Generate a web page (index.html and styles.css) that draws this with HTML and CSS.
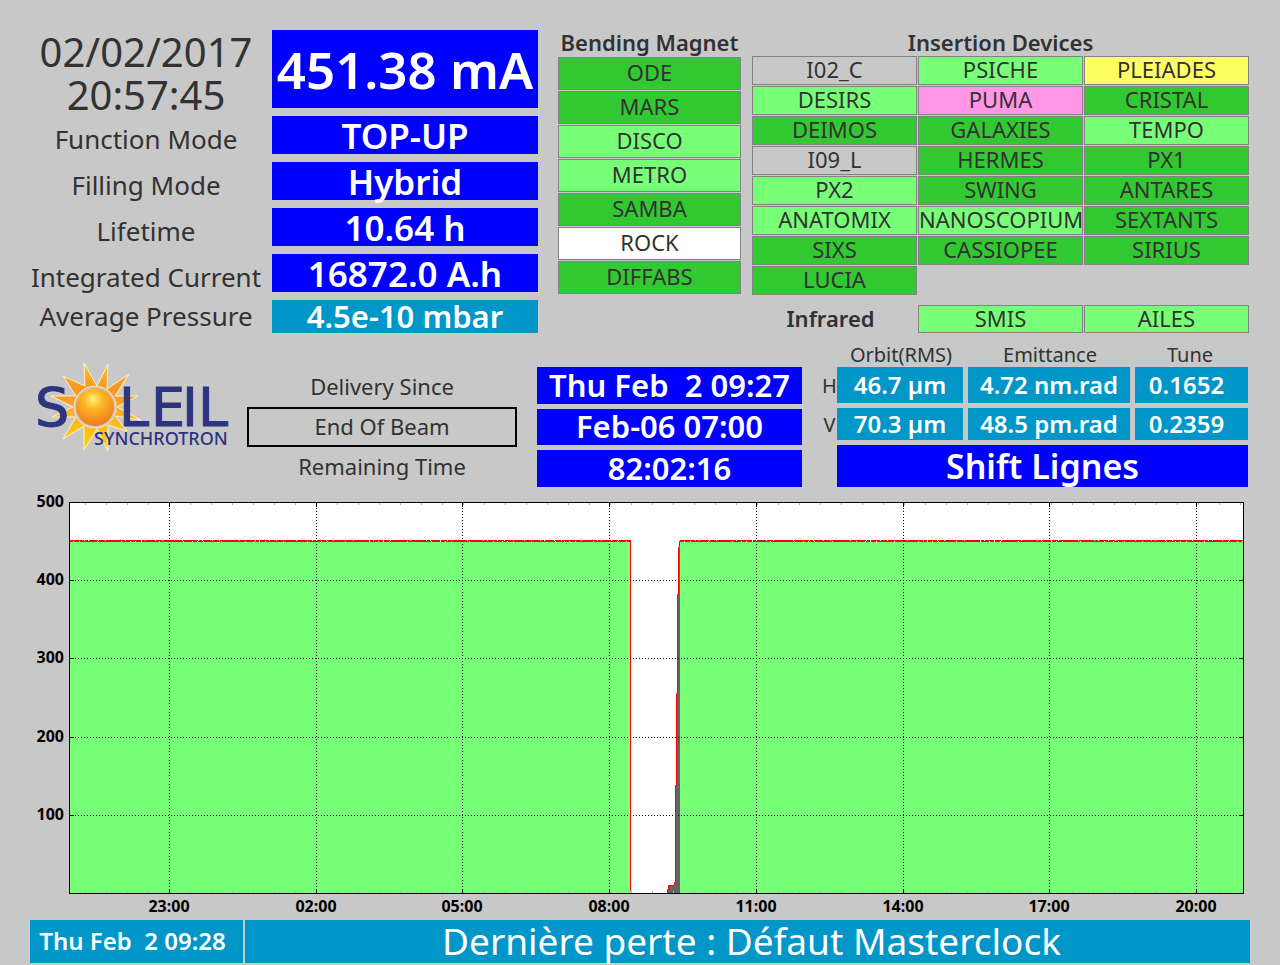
FILE: index.html
```
<!DOCTYPE html>
<html lang="en">
<head>
    <meta charset="UTF-8">
    <meta name="viewport" content="width=device-width, initial-scale=1.0">
    <title>SOLEIL Machine Status</title>
    <link rel="stylesheet" href="styles.css">
</head>
<body>
    <main class="page">
        <section class="top">
            <div class="status">
                <div class="clock">02/02/2017<br>20:57:45</div>
                <div class="value current">451.38 mA</div>
                <div class="label">Function Mode</div>
                <div class="value">TOP-UP</div>
                <div class="label">Filling Mode</div>
                <div class="value">Hybrid</div>
                <div class="label">Lifetime</div>
                <div class="value">10.64 h</div>
                <div class="label">Integrated Current</div>
                <div class="value">16872.0 A.h</div>
                <div class="label pressure-label">Average Pressure</div>
                <div class="value pressure">4.5e-10 mbar</div>
            </div>
            <div class="magnets">
                <h2>Bending Magnet</h2>
                <ul class="beamlines">
                    <li class="open">ODE</li>
                    <li class="open">MARS</li>
                    <li class="ready">DISCO</li>
                    <li class="ready">METRO</li>
                    <li class="open">SAMBA</li>
                    <li class="closed">ROCK</li>
                    <li class="open">DIFFABS</li>
                </ul>
            </div>
            <div class="devices">
                <h2>Insertion Devices</h2>
                <ul class="beamlines">
                    <li>I02_C</li>
                    <li class="ready">PSICHE</li>
                    <li class="warning">PLEIADES</li>
                    <li class="ready">DESIRS</li>
                    <li class="fault">PUMA</li>
                    <li class="open">CRISTAL</li>
                    <li class="open">DEIMOS</li>
                    <li class="open">GALAXIES</li>
                    <li class="ready">TEMPO</li>
                    <li>I09_L</li>
                    <li class="open">HERMES</li>
                    <li class="open">PX1</li>
                    <li class="ready">PX2</li>
                    <li class="open">SWING</li>
                    <li class="open">ANTARES</li>
                    <li class="ready">ANATOMIX</li>
                    <li class="ready">NANOSCOPIUM</li>
                    <li class="open">SEXTANTS</li>
                    <li class="open">SIXS</li>
                    <li class="open">CASSIOPEE</li>
                    <li class="open">SIRIUS</li>
                    <li class="open">LUCIA</li>
                </ul>
                <div class="infrared">
                    <h2>Infrared</h2>
                    <div class="beamline ready">SMIS</div>
                    <div class="beamline ready">AILES</div>
                </div>
            </div>
        </section>

        <section class="middle">
            <div class="logo">
                <svg width="199" height="91" viewBox="-5 0 199 91" role="img" aria-label="SOLEIL Synchrotron">
                    <defs>
                        <radialGradient id="ball" cx="0.45" cy="0.3" r="0.7">
                            <stop offset="0" stop-color="#fff27a"/>
                            <stop offset="0.35" stop-color="#fdb827"/>
                            <stop offset="1" stop-color="#ee7a1c"/>
                        </radialGradient>
                        <linearGradient id="rays" x1="0" y1="0" x2="0" y2="1">
                            <stop offset="0" stop-color="#fcbf30"/>
                            <stop offset="0.3" stop-color="#f79420"/>
                            <stop offset="0.6" stop-color="#fbb42c"/>
                            <stop offset="1" stop-color="#ffd200"/>
                        </linearGradient>
                    </defs>
                    <polygon points="47,1 60,24 71,2 70,27 92,12 78,34 101,34 80,45 104,58 78,54 90,69 71,63 71,89 60,67 47,88 47,64 26,77 39,55 15,55 36,45 14,34 39,34 26,14 48,24" fill="url(#rays)" stroke="#fff3c4" stroke-width="1"/>
                    <g class="logo-name">
                        <text x="-2" y="64">S</text>
                        <text x="82" y="64">L</text>
                        <text x="114" y="64">E</text>
                        <text x="145" y="64">I</text>
                        <text x="161" y="64">L</text>
                    </g>
                    <circle cx="58" cy="45" r="21" fill="#c8c8c8" stroke="#f4e6c8" stroke-width="1"/>
                    <circle cx="58" cy="45" r="19" fill="url(#ball)"/>
                    <text class="logo-sub" x="57" y="83">SYNCHROTRON</text>
                </svg>
            </div>
            <div class="delivery">
                <div>Delivery Since</div>
                <div class="framed">End Of Beam</div>
                <div>Remaining Time</div>
            </div>
            <div class="times">
                <div class="value">Thu Feb&nbsp; 2 09:27</div>
                <div class="value">Feb-06 07:00</div>
                <div class="value">82:02:16</div>
            </div>
            <div class="beam">
                <table>
                    <colgroup>
                        <col class="axis-col">
                        <col class="orbit-col">
                        <col class="emittance-col">
                        <col class="tune-col">
                    </colgroup>
                    <thead>
                        <tr>
                            <td></td>
                            <th scope="col">Orbit(RMS)</th>
                            <th scope="col">Emittance</th>
                            <th scope="col">Tune</th>
                        </tr>
                    </thead>
                    <tbody>
                        <tr class="horizontal">
                            <th scope="row">H</th>
                            <td>46.7 µm</td>
                            <td>4.72 nm.rad</td>
                            <td>0.1652</td>
                        </tr>
                        <tr class="vertical">
                            <th scope="row">V</th>
                            <td>70.3 µm</td>
                            <td>48.5 pm.rad</td>
                            <td>0.2359</td>
                        </tr>
                    </tbody>
                </table>
                <div class="value shift">Shift Lignes</div>
            </div>
        </section>

        <svg class="chart" viewBox="0 0 1220 430" role="img" aria-label="Stored current over the last 24 hours">
            <rect x="39" y="12" width="1175" height="391" fill="#fff"/>
            <!-- delivered beam -->
            <rect class="beam-area" x="39" y="52" width="562" height="351"/>
            <rect class="beam-area" x="650" y="52" width="564" height="351"/>
            <!-- injection -->
            <polygon fill="#646464" points="638,403 638,396 645,396 645,392 646,392 646,295 647,295 647,204 648,204 648,104 649,104 649,58 650,58 650,403"/>
            <g class="grid">
                <path d="M39 90.5H1214M39 168.5H1214M39 247.5H1214M39 325.5H1214"/>
                <path d="M139.5 12V403M286.5 12V403M432.5 12V403M579.5 12V403M726.5 12V403M873.5 12V403M1019.5 12V403M1166.5 12V403"/>
            </g>
            <g class="minor">
                <path d="M55 14H1213"/>
                <path d="M55 402H1213"/>
            </g>
            <g class="trace">
                <path class="noise-top" d="M39 50.5H600M650 50.5H1213"/>
                <path class="noise-bottom" d="M39 51.5H600M650 51.5H1213"/>
                <path d="M600.5 50V401"/>
                <path d="M637.5 403V399.5H638.5V395.5H644.5V392.5H645.5V295.5H646.5V203.5H647.5V104.5H648.5V57.5H649.5V51"/>
            </g>
            <g class="axes">
                <rect x="39.5" y="12.5" width="1174" height="391"/>
                <path d="M40 90.5h4M40 168.5h4M40 247.5h4M40 325.5h4M1213 90.5h-4M1213 168.5h-4M1213 247.5h-4M1213 325.5h-4"/>
                <path d="M139.5 13v4M286.5 13v4M432.5 13v4M579.5 13v4M726.5 13v4M873.5 13v4M1019.5 13v4M1166.5 13v4"/>
                <path d="M139.5 403v-4M286.5 403v-4M432.5 403v-4M579.5 403v-4M726.5 403v-4M873.5 403v-4M1019.5 403v-4M1166.5 403v-4"/>
            </g>
            <g class="y-labels">
                <text x="34" y="17">500</text>
                <text x="34" y="95">400</text>
                <text x="34" y="173">300</text>
                <text x="34" y="252">200</text>
                <text x="34" y="330">100</text>
            </g>
            <g class="x-labels">
                <text x="139" y="422">23:00</text>
                <text x="286" y="422">02:00</text>
                <text x="432" y="422">05:00</text>
                <text x="579" y="422">08:00</text>
                <text x="726" y="422">11:00</text>
                <text x="873" y="422">14:00</text>
                <text x="1019" y="422">17:00</text>
                <text x="1166" y="422">20:00</text>
            </g>
        </svg>

        <footer>
            <div class="loss-time">Thu Feb&nbsp; 2 09:28</div>
            <div class="loss-message">Dernière perte : Défaut Masterclock</div>
        </footer>
    </main>
</body>
</html>
```

FILE: styles.css
```
* {
    box-sizing: border-box;
}
body {
    font-family: "Noto Sans", "Open Sans", sans-serif;
    margin: 0;
    background: #c8c8c8;
    color: #323232;
    line-height: 1;
    text-align: center;
}
h2 {
    font-size: 22px;
    font-weight: 600;
    margin: 0;
    white-space: nowrap;
}
ul {
    list-style: none;
    margin: 0;
    padding: 0;
}
.page {
    padding: 30px 30px 2px;
}
.value {
    background: #0000ff;
    color: #fff;
    font-size: 34px;
    font-weight: 600;
    display: flex;
    align-items: center;
    justify-content: center;
    white-space: nowrap;
}

/* Machine status and beamlines */
.top {
    display: grid;
    grid-template-columns: 517fr 183fr 497fr;
    column-gap: 11px;
    padding-right: 1px;
}
.status {
    display: grid;
    grid-template-columns: 232fr 266fr;
    grid-template-rows: 78px repeat(4, 38px) 33px;
    gap: 8px 10px;
    padding-right: 9px;
}
.clock {
    font-size: 40px;
    line-height: 43px;
}
.label {
    font-size: 26px;
    line-height: 38px;
    padding-top: 4px;
    white-space: nowrap;
}
.pressure-label {
    line-height: 33px;
    padding-top: 0;
}
.status .value {
    font-size: 35px;
}
.status .current {
    font-size: 51px;
}
.status .pressure {
    background: #0096c8;
    font-size: 31px;
}
.magnets h2,
.devices > h2 {
    line-height: 24px;
    padding-bottom: 2px;
}
.beamlines {
    display: grid;
    gap: 1px;
}
.beamlines li,
.beamline {
    border: 1px solid #828282;
    font-size: 22px;
    line-height: 25px;
    padding-bottom: 2px;
}
.magnets .beamlines {
    margin-top: 1px;
}
.magnets .beamlines li {
    line-height: 29px;
}
.devices .beamlines,
.infrared {
    display: grid;
    grid-template-columns: repeat(3, minmax(0, 1fr));
}
.infrared {
    column-gap: 1px;
    margin-top: 10px;
}
.infrared h2 {
    line-height: 26px;
    padding-right: 8px;
}
.infrared .beamline {
    line-height: 24px;
}
.open {
    background: #32c832;
}
.ready {
    background: #78ff78;
}
.warning {
    background: #ffff64;
}
.fault {
    background: #ff96e6;
}
.closed {
    background: #fff;
}

/* Delivery and beam parameters */
.middle {
    display: grid;
    grid-template-columns: 217fr 290fr 265fr 446fr;
    align-items: end;
    margin-top: 10px;
    padding-right: 2px;
}
.logo {
    align-self: start;
    padding: 19px 0 0 2px;
    text-align: left;
}
.logo svg {
    display: block;
}
.logo-name,
.logo-sub {
    fill: #2d3480;
}
.logo-name {
    font-family: "DejaVu Sans", sans-serif;
    font-size: 54px;
    stroke: #2d3480;
    stroke-width: 1;
}
.logo-sub {
    font-size: 18px;
    font-weight: 500;
}
.delivery {
    font-size: 22px;
    line-height: 38px;
    padding-right: 20px;
}
.delivery div {
    padding-bottom: 2px;
}
.delivery .framed {
    border: 2px solid #000;
    line-height: 34px;
}
.times {
    display: grid;
    grid-template-rows: repeat(3, 1fr);
    gap: 5px;
    height: 120px;
}
.times .value {
    font-size: 31px;
}
.beam {
    padding-left: 20px;
}
table {
    width: 100%;
    table-layout: fixed;
    border-spacing: 0;
}
.axis-col {
    width: 15px;
}
.orbit-col {
    width: 131px;
}
.emittance-col {
    width: 167px;
}
.tune-col {
    width: 113px;
}
th {
    font-size: 20px;
    font-weight: 400;
    padding: 0;
}
thead th {
    height: 24px;
    padding-right: 3px;
}
tbody th {
    padding-bottom: 3px;
}
tbody td {
    background: #0096c8;
    background-clip: padding-box;
    border: solid transparent;
    border-width: 0 5px 5px 0;
    color: #fff;
    font-size: 24px;
    font-weight: 600;
    padding: 0;
    white-space: nowrap;
}
tbody td:last-child {
    border-right: 0;
    padding-right: 10px;
}
.horizontal {
    height: 41px;
}
.vertical {
    height: 37px;
}
.shift {
    height: 42px;
    margin-left: 15px;
}

/* Current history */
.chart {
    display: block;
    width: 100%;
    margin-top: 3px;
}
.beam-area {
    fill: #78ff78;
}
.grid path,
.axes rect,
.axes path {
    fill: none;
    stroke: #000;
}
.grid path {
    stroke-dasharray: 1 2;
}
.minor path {
    fill: none;
    stroke: #b4b4b4;
    stroke-width: 2;
    stroke-dasharray: 1 20;
}
.trace path {
    fill: none;
    stroke: #ff0000;
}
.trace .noise-top {
    stroke-dasharray: 15 1 3 1 9 1 6 1 19 1;
}
.trace .noise-bottom {
    stroke-dasharray: 4 1 5 1 17 1 23 1 8 1;
}
.chart text {
    font-size: 16px;
    font-weight: 700;
    fill: #000;
}
.y-labels {
    text-anchor: end;
}
.x-labels {
    text-anchor: middle;
}

/* Last beam loss */
footer {
    display: grid;
    grid-template-columns: 213fr 1005fr;
    gap: 2px;
    color: #fff;
    line-height: 41px;
    white-space: nowrap;
}
footer div {
    background: #0096c8;
    padding-bottom: 2px;
}
.loss-time {
    font-size: 24px;
    font-weight: 600;
    padding-right: 8px;
}
.loss-message {
    font-size: 37px;
    padding-left: 8px;
}
```
